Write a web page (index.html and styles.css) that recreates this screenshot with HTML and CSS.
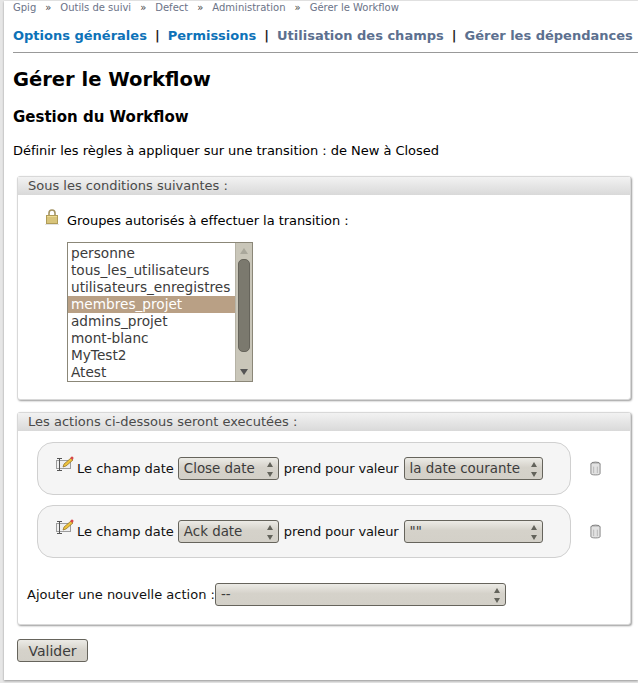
FILE: index.html
```html
<!DOCTYPE html>
<html lang="fr">
<head>
    <meta charset="UTF-8" />
    <title>Gérer le Workflow</title>
    <link rel="stylesheet" href="styles.css">
</head>
<body>
<div id="page">
    <div class="breadcrumb">
        <a>Gpig</a><span class="sep">»</span><a>Outils de suivi</a><span class="sep">»</span><a>Defect</a><span class="sep">»</span><a>Administration</a><span class="sep">»</span><a>Gérer le Workflow</a>
    </div>

    <div class="tabs">
        <a class="on">Options générales</a><span class="bar">|</span><a class="on">Permissions</a><span class="bar">|</span><a>Utilisation des champs</a><span class="bar">|</span><a>Gérer les dépendances</a>
    </div>

    <h1>Gérer le Workflow</h1>
    <h2>Gestion du Workflow</h2>
    <p class="intro">Définir les règles à appliquer sur une transition : de New à Closed</p>

    <div class="panel panel-cond">
        <div class="panel-title">Sous les conditions suivantes :</div>
        <div class="cond-head">
            <svg class="lock" width="14" height="16" viewBox="0 0 14 16">
                <path d="M4 7V4a3 3 0 0 1 6 0v3" fill="none" stroke="#a39362" stroke-width="1.6"/>
                <rect x="1.5" y="6.5" width="11" height="8" fill="#ecd98f" stroke="#b09c58"/>
                <path d="M2 9h10M2 11h10M2 13h10" stroke="#c4af66"/>
                <rect x="0" y="15" width="14" height="1" fill="#e2e2e2"/>
            </svg>
            <span>Groupes autorisés à effectuer la transition :</span>
        </div>
        <div class="listbox">
            <ul class="options">
                <li>personne</li>
                <li>tous_les_utilisateurs</li>
                <li>utilisateurs_enregistres</li>
                <li class="selected">membres_projet</li>
                <li>admins_projet</li>
                <li>mont-blanc</li>
                <li>MyTest2</li>
                <li>Atest</li>
            </ul>
            <div class="scrollbar">
                <span class="up"></span>
                <span class="thumb"></span>
                <span class="down"></span>
            </div>
        </div>
    </div>

    <div class="panel panel-actions">
        <div class="panel-title">Les actions ci-dessous seront executées :</div>

        <div class="action-line">
            <div class="action">
                <svg class="edit" width="19" height="17" viewBox="0 0 19 17">
                    <rect x="1.5" y="4.5" width="14" height="8" fill="#efefef" stroke="#9c9c9c"/>
                    <path d="M2 2.5h5M4.5 2.5v12M2 14.5h5" fill="none" stroke="#555"/>
                    <path d="M8 11l1-3 7-6 2 2-7 6z" fill="#eec33c" stroke="#8a6a20" stroke-width=".7"/>
                    <circle cx="17" cy="2" r="1.5" fill="#d8474a"/>
                </svg>
                <span>Le champ date</span>
                <span class="select sel-field">Close date<i class="arrows"></i></span>
                <span class="takes">prend pour valeur</span>
                <span class="select sel-value">la date courante<i class="arrows"></i></span>
            </div>
            <svg class="trash" width="11" height="15" viewBox="0 0 12 16">
                <ellipse cx="6" cy="3" rx="5" ry="2" fill="#c4c4c4" stroke="#777"/>
                <path d="M1 3v10.500c0 1 2 1.500 5 1.500s5-.5 5-1.500V3" fill="#e2e2e2" stroke="#808080"/>
                <path d="M4 6v7M8 6v7" stroke="#b5b5b5"/>
            </svg>
        </div>

        <div class="action-line">
            <div class="action">
                <svg class="edit" width="19" height="17" viewBox="0 0 19 17">
                    <rect x="1.5" y="4.5" width="14" height="8" fill="#efefef" stroke="#9c9c9c"/>
                    <path d="M2 2.5h5M4.5 2.5v12M2 14.5h5" fill="none" stroke="#555"/>
                    <path d="M8 11l1-3 7-6 2 2-7 6z" fill="#eec33c" stroke="#8a6a20" stroke-width=".7"/>
                    <circle cx="17" cy="2" r="1.5" fill="#d8474a"/>
                </svg>
                <span>Le champ date</span>
                <span class="select sel-field">Ack date<i class="arrows"></i></span>
                <span class="takes">prend pour valeur</span>
                <span class="select sel-value">""<i class="arrows"></i></span>
            </div>
            <svg class="trash" width="11" height="15" viewBox="0 0 12 16">
                <ellipse cx="6" cy="3" rx="5" ry="2" fill="#c4c4c4" stroke="#777"/>
                <path d="M1 3v10.500c0 1 2 1.500 5 1.500s5-.5 5-1.500V3" fill="#e2e2e2" stroke="#808080"/>
                <path d="M4 6v7M8 6v7" stroke="#b5b5b5"/>
            </svg>
        </div>

        <div class="add-action">
            <span>Ajouter une nouvelle action :</span>
            <span class="select sel-add">--<i class="arrows"></i></span>
        </div>
    </div>

    <button class="validate">Valider</button>
</div>
</body>
</html>
```

FILE: styles.css
```css
html, body {
    margin: 0;
    padding: 0;
}

body {
    background: #e6e6e6;
    font-family: "DejaVu Sans", sans-serif;
    font-size: 13px;
    color: #000;
    height: 683px;
    overflow: hidden;
}

#page {
    background: #fff;
    margin: 1px 0 0 4px;
    height: 679px;
    padding: 0 0 0 9px;
    box-shadow: 0 1px 2px rgba(0,0,0,0.35);
    box-sizing: border-box;
    overflow: hidden;
}

.breadcrumb {
    font-size: 10px;
    line-height: 12px;
    height: 12px;
    padding-top: 1px;
    color: #6b7388;
    white-space: nowrap;
}
.breadcrumb .sep {
    margin: 0 9px;
    color: #444;
}

.tabs {
    margin-top: 14px;
    height: 24px;
    width: 625px;
    border-bottom: 1px solid #999;
    font-size: 13px;
    font-weight: bold;
    line-height: 16px;
    color: #5c708f;
    white-space: nowrap;
    overflow: hidden;
}
.tabs .on {
    color: #0d72b8;
}
.tabs .bar {
    margin: 0 8px;
    color: #222;
}

h1 {
    font-size: 19.5px;
    line-height: 24px;
    margin: 15px 0 0 0;
}

h2 {
    font-size: 15px;
    line-height: 18px;
    margin: 16px 0 0 0;
}

.intro {
    font-size: 13px;
    line-height: 16px;
    letter-spacing: -0.03px;
    margin: 17px 0 0 0;
}

.panel {
    width: 614px;
    margin-left: 4px;
    border: 1px solid #d8d8d8;
    border-radius: 3px;
    box-shadow: 1px 1px 2px rgba(0,0,0,0.4);
    background: #fff;
    box-sizing: border-box;
}

.panel-cond {
    margin-top: 17px;
    height: 224px;
}

.panel-actions {
    margin-top: 12px;
    height: 213px;
}

.panel-title {
    height: 18px;
    line-height: 17px;
    padding-left: 10px;
    background: linear-gradient(#f2f2f2, #d9d9d9);
    color: #4a4a4a;
    font-size: 13px;
}

.cond-head {
    display: flex;
    align-items: flex-start;
    margin: 16px 0 0 27px;
    line-height: 19px;
    letter-spacing: -0.05px;
}
.lock {
    margin: -2px 8px 0 0;
}

.listbox {
    display: flex;
    width: 186px;
    height: 140px;
    margin: 12px 0 0 49px;
    border: 1px solid #8b8778;
    box-sizing: border-box;
}

.options {
    flex: 1;
    list-style: none;
    margin: 0;
    padding: 2px 0 0 0;
    font-size: 13.67px;
    line-height: 17px;
    color: #3c3c3c;
    white-space: nowrap;
    overflow: hidden;
}
.options li {
    padding-left: 3px;
    height: 17px;
}
.options .selected {
    background: #b9a085;
    color: #fff;
}

.scrollbar {
    display: flex;
    flex-direction: column;
    align-items: center;
    width: 17px;
    background: #c9c6b9;
    border-left: 1px solid #b5b2a5;
    box-sizing: border-box;
}
.scrollbar .thumb {
    width: 12px;
    height: 93px;
    margin-top: 5px;
    background: #7b796e;
    border: 1px solid #66645b;
    border-radius: 5px;
    box-sizing: border-box;
}
.scrollbar .up {
    margin-top: 5px;
    border: 4px solid transparent;
    border-top: 0;
    border-bottom: 6px solid #a9a79b;
}
.scrollbar .down {
    margin-top: 17px;
    border: 4px solid transparent;
    border-bottom: 0;
    border-top: 6px solid #555;
}

.action-line {
    display: flex;
    align-items: center;
    margin: 10px 0 0 19px;
}
.panel-title + .action-line {
    margin-top: 11px;
}

.action {
    display: flex;
    align-items: center;
    width: 534px;
    height: 53px;
    padding-left: 17px;
    gap: 5px;
    background: #f5f5f5;
    border: 1px solid #d0d0d0;
    border-radius: 16px;
    box-sizing: border-box;
    color: #111;
}
.action .edit {
    align-self: flex-start;
    margin: 13px -2px 0 0;
}
.action .takes {
    letter-spacing: -0.12px;
}
.trash {
    margin: -1px 0 0 19px;
}

.select {
    position: relative;
    display: block;
    height: 23px;
    line-height: 21px;
    padding-left: 5px;
    font-size: 13.4px;
    color: #3c3c3c;
    background: linear-gradient(#ecebe6, #d5d2ca 45%, #d3d0c8);
    border: 1px solid #66645c;
    border-radius: 3px;
    box-sizing: border-box;
    white-space: nowrap;
}
.sel-field {
    width: 101px;
    margin-left: -1px;
}
.sel-value {
    width: 139px;
}
.sel-add {
    width: 291px;
}

.arrows {
    position: absolute;
    right: 4px;
    top: 4px;
    width: 7px;
    height: 15px;
}
.arrows::before, .arrows::after {
    content: "";
    position: absolute;
    left: 0;
    border: 3.5px solid transparent;
}
.arrows::before {
    top: 0;
    border-top: 0;
    border-bottom: 5px solid #63635b;
}
.arrows::after {
    bottom: 0;
    border-bottom: 0;
    border-top: 5px solid #63635b;
}

.add-action {
    display: flex;
    align-items: center;
    margin: 25px 0 0 9px;
    color: #111;
}

.validate {
    display: block;
    width: 71px;
    height: 23px;
    margin: 14px 0 0 4px;
    padding: 0;
    font-family: "DejaVu Sans", sans-serif;
    font-size: 14px;
    color: #3c3c3c;
    background: linear-gradient(#ecebe6, #d5d2ca 50%, #d3d0c8);
    border: 1px solid #66645c;
    border-radius: 3px;
}
```
